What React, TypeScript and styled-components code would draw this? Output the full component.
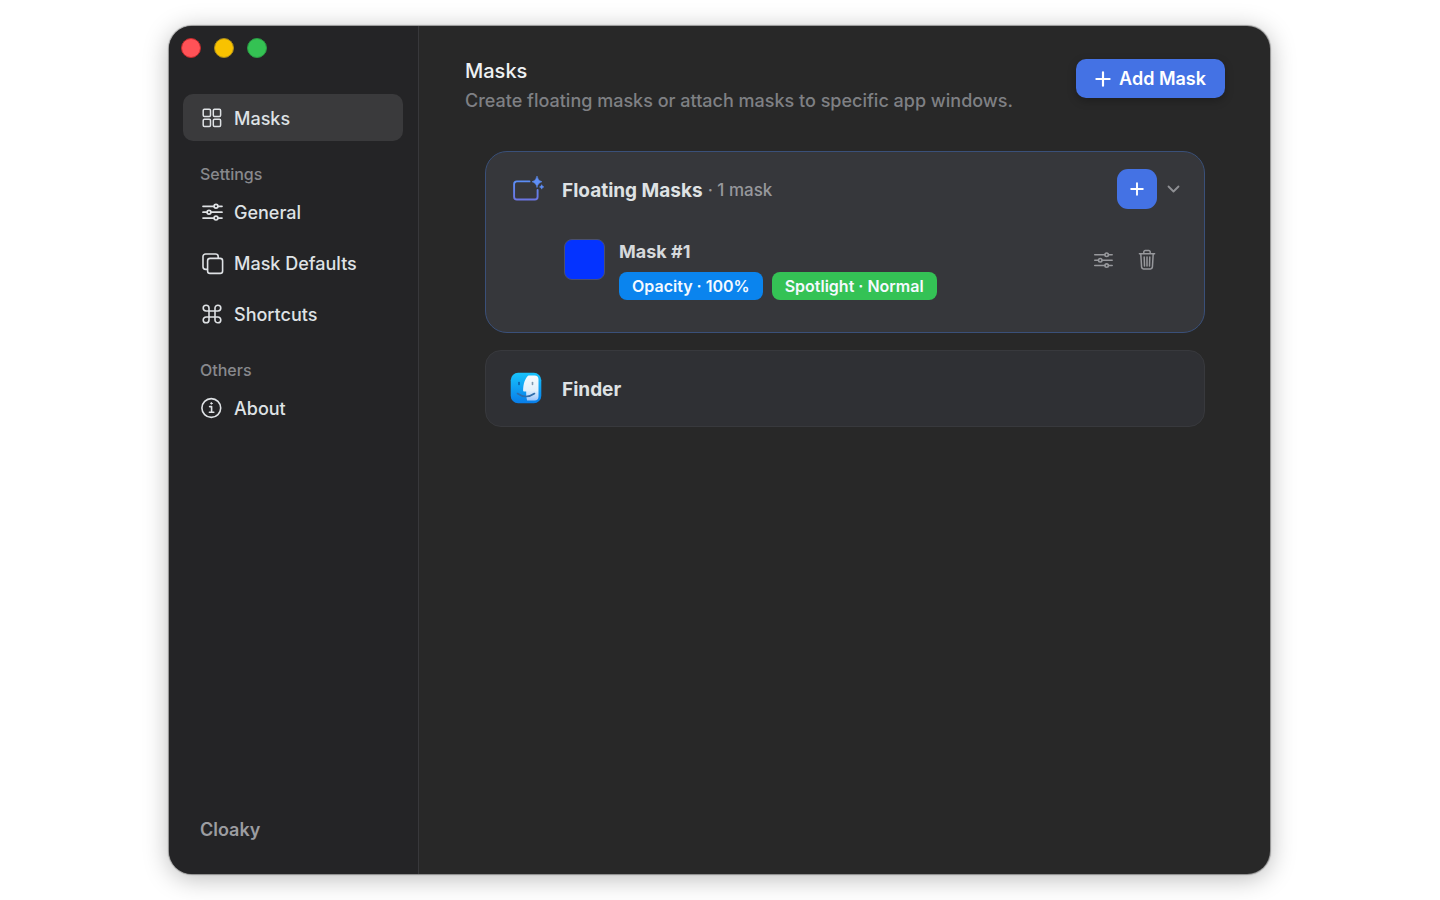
import React from "react";
import styled, { createGlobalStyle } from "styled-components";

const GlobalStyle = createGlobalStyle`
  * { box-sizing: border-box; }
  body {
    margin: 0;
    background: #ffffff;
    font-family: Inter, "Liberation Sans", sans-serif;
    -webkit-font-smoothing: antialiased;
  }
  h1, h2, h3, p, ul { margin: 0; padding: 0; }
  ul { list-style: none; }
  button { font-family: inherit; border: 0; padding: 0; background: none; cursor: pointer; }
`;

const Page = styled.div`
  display: flex;
  min-height: 100vh;
  padding: 26px 170px 26px 169px;
`;

const AppWindow = styled.div`
  display: flex;
  flex: 1;
  min-width: 0;
  overflow: hidden;
  border-radius: 23px;
  background: #282828;
  box-shadow: 0 0 1px 1px rgba(0, 0, 0, 0.35), 0 4px 26px rgba(0, 0, 0, 0.28);
`;

const Sidebar = styled.aside`
  display: flex;
  flex-direction: column;
  flex: none;
  width: 250px;
  padding: 12px 15px 32px 14px;
  background: #242426;
  border-right: 1px solid #38383b;
`;

const WindowControls = styled.div`
  display: flex;
  gap: 13px;
  height: 20px;
  margin: 0 0 36px -2px;
`;

const WindowControl = styled.button<{ $fill: string; $edge: string }>`
  width: 20px;
  height: 20px;
  border-radius: 50%;
  background: ${(p) => p.$fill};
  border: 1px solid ${(p) => p.$edge};
`;

const Nav = styled.nav`
  display: flex;
  flex-direction: column;
  flex: 1;
`;

const NavGroup = styled.ul`
  display: flex;
  flex-direction: column;
  gap: 4px;
`;

const NavHeading = styled.h3`
  padding: 22px 17px 3px;
  font-size: 16px;
  line-height: 22px;
  font-weight: 500;
  color: #88898d;
`;

const NavLink = styled.a<{ $active?: boolean }>`
  display: flex;
  align-items: center;
  gap: 10px;
  height: 47px;
  padding: 2px 17px 0;
  border-radius: 10px;
  background: ${(p) => (p.$active ? "#3a3a3c" : "transparent")};
  color: #dfe2e5;
  font-size: 18px;
  line-height: 24px;
  font-weight: 500;
  text-decoration: none;
  svg { flex: none; margin-bottom: 2px; }
`;

const Brand = styled.p`
  padding: 0 17px;
  font-size: 18px;
  line-height: 24px;
  font-weight: 600;
  color: #9c9da1;
`;

const Main = styled.main`
  flex: 1;
  min-width: 0;
  padding: 32px 45px 32px 46px;
`;

const Header = styled.header`
  display: flex;
  justify-content: space-between;
  align-items: flex-start;
  min-height: 93px;
`;

const Title = styled.h1`
  font-size: 20px;
  line-height: 26px;
  font-weight: 500;
  color: #eef1f3;
`;

const Subtitle = styled.p`
  margin-top: 5px;
  font-size: 18px;
  line-height: 24px;
  font-weight: 500;
  color: #7f8084;
`;

const AddButton = styled.button`
  display: flex;
  align-items: center;
  justify-content: center;
  gap: 8px;
  flex: none;
  height: 39px;
  margin-top: 1px;
  padding: 0 19px;
  border-radius: 10px;
  background: #4472e4;
  box-shadow: 0 3px 8px rgba(0, 0, 0, 0.25);
  color: #ffffff;
  font-size: 18px;
  line-height: 24px;
  font-weight: 600;
`;

const CardList = styled.div`
  display: flex;
  flex-direction: column;
  gap: 17px;
  padding: 0 20px;
`;

const Card = styled.section<{ $highlighted?: boolean }>`
  padding: ${(p) => (p.$highlighted ? "17px 24px 32px 24px" : "17px 24px 18px 24px")};
  border: 1px solid ${(p) => (p.$highlighted ? "#3a5079" : "#38393d")};
  border-radius: ${(p) => (p.$highlighted ? "22px" : "16px")};
  background: ${(p) => (p.$highlighted ? "#36373b" : "#2f3034")};
`;

const CardHeader = styled.div`
  display: flex;
  align-items: center;
  height: 40px;
`;

const CardIcon = styled.div`
  display: flex;
  flex: none;
  width: 52px;
`;

const CardTitle = styled.h2`
  padding-top: 3px;
  font-size: 19px;
  line-height: 26px;
  font-weight: 700;
  color: #dfe2e4;
`;

const Count = styled.span`
  margin-left: 5px;
  flex: 1;
  padding-top: 1px;
  font-size: 17px;
  line-height: 24px;
  font-weight: 500;
  color: #97989c;
`;

const SquareButton = styled.button`
  display: flex;
  align-items: center;
  justify-content: center;
  width: 40px;
  height: 40px;
  border-radius: 11px;
  background: #4472e4;
  color: #ffffff;
`;

const ChevronButton = styled.button`
  display: flex;
  margin-left: 10px;
  color: #8f9094;
`;

const MaskRow = styled.div`
  display: flex;
  align-items: flex-start;
  margin-top: 30px;
  padding-left: 54px;
`;

const Swatch = styled.div`
  flex: none;
  width: 41px;
  height: 41px;
  margin-right: 14px;
  border: 1px solid #4a5070;
  border-radius: 8px;
  background: #0433ff;
`;

const MaskInfo = styled.div`
  flex: 1;
  min-width: 0;
`;

const MaskName = styled.h3`
  font-size: 18px;
  line-height: 25px;
  font-weight: 700;
  color: #d6d9db;
`;

const Tags = styled.div`
  display: flex;
  gap: 9px;
  margin-top: 8px;
`;

const Tag = styled.span<{ $color: string }>`
  padding: 0 13px;
  border-radius: 8px;
  background: ${(p) => p.$color};
  color: #f4f9ff;
  font-size: 16px;
  line-height: 28px;
  font-weight: 600;
`;

const RowActions = styled.div`
  display: flex;
  align-items: center;
  gap: 23px;
  height: 41px;
  margin-right: 23px;
  color: #97989c;
  button { display: flex; color: inherit; }
`;

const stroke = {
  fill: "none",
  stroke: "currentColor",
  strokeWidth: 1.5,
  strokeLinecap: "round" as const,
  strokeLinejoin: "round" as const,
  "aria-hidden": true,
};

const GridIcon = () => (
  <svg width="24" height="24" viewBox="0 0 24 24" {...stroke}>
    <rect x="3.2" y="3.2" width="7.3" height="7.3" rx="1.2" />
    <rect x="13.3" y="3.2" width="7.3" height="7.3" rx="1.2" />
    <rect x="3.2" y="13.2" width="7.3" height="7.3" rx="1.2" />
    <rect x="13.3" y="13.2" width="7.3" height="7.3" rx="1.2" />
  </svg>
);

const SlidersIcon = ({ size = 24 }: { size?: number }) => (
  <svg width={size} height={size} viewBox="0 0 24 24" {...stroke} strokeWidth="1.7">
    <path d="M3 6.3h11M18 6.3h4M3 12.2h4M11 12.2h11M3 18.1h11M18 18.1h4" />
    <circle cx="16" cy="6.3" r="1.9" />
    <circle cx="9" cy="12.2" r="1.9" />
    <circle cx="16" cy="18.1" r="1.9" />
  </svg>
);

const CopyIcon = () => (
  <svg width="24" height="24" viewBox="0 0 24 24" {...stroke} strokeWidth="1.6">
    <rect x="7.6" y="7.4" width="15" height="15" rx="2.4" />
    <path d="M7.4 18.4H5.6A2.6 2.6 0 0 1 3 15.800V5.600a2.600 2.600 0 0 1 2.600-2.600h10a2.600 2.600 0 0 1 2.600 2.600v1.600" />
  </svg>
);

const CommandIcon = () => (
  <svg width="24" height="24" viewBox="0 0 24 24" {...stroke} strokeWidth="1.6">
    <path d="M9 9h6v6H9zM9 9H6.1A2.9 2.9 0 1 1 9 6.1zM15 9V6.1A2.9 2.9 0 1 1 17.9 9zM15 15h2.9a2.9 2.9 0 1 1-2.9 2.9zM9 15v2.9A2.9 2.9 0 1 1 6.1 15z" />
  </svg>
);

const InfoIcon = () => (
  <svg width="24" height="24" viewBox="0 0 24 24" {...stroke} strokeWidth="1.6">
    <circle cx="11.3" cy="12" r="9.4" />
    <path d="M9.6 10.6h2v5.6M9.4 16.2h4.4" />
    <circle cx="11.4" cy="7.4" r="0.8" fill="currentColor" strokeWidth="0.8" />
  </svg>
);

const PlusIcon = ({ size }: { size: number }) => (
  <svg width={size} height={size} viewBox="0 0 14 14" {...stroke} strokeWidth="1.9">
    <path d="M7 1.200v11.600M1.200 7h11.600" />
  </svg>
);

const ChevronIcon = () => (
  <svg width="13" height="14" viewBox="0 0 13 14" {...stroke} strokeWidth="1.8">
    <path d="M1.500 4.500l5 5 5-5" />
  </svg>
);

const TrashIcon = () => (
  <svg width="20" height="22" viewBox="0 0 20 22" {...stroke}>
    <path d="M2.400 4.800h15.200M6.800 4.600V3a1.400 1.400 0 0 1 1.400-1.400h3.600A1.400 1.400 0 0 1 13.200 3v1.600M3.800 5l.8 13.200a1.900 1.900 0 0 0 1.900 1.700h7a1.900 1.900 0 0 0 1.900-1.700L16.200 5M7.200 8l.3 9M10 8v9M12.800 8l-.3 9" />
  </svg>
);

const SparkleWindowIcon = () => (
  <svg width="34" height="28" viewBox="0 0 34 28" fill="none" aria-hidden="true">
    <defs>
      <linearGradient id="frame" x1="0" y1="0" x2="0" y2="1">
        <stop offset="0" stopColor="#5b8df5" />
        <stop offset="1" stopColor="#6b75e3" />
      </linearGradient>
    </defs>
    <path
      d="M19.500 6.400H6.900A2.800 2.800 0 0 0 4.100 9.200V21.700a2.800 2.800 0 0 0 2.800 2.800h17.900a2.800 2.800 0 0 0 2.800-2.800V15"
      stroke="url(#frame)"
      strokeWidth="1.9"
      strokeLinecap="round"
    />
    <path d="M27 1Q27.900 5.900 32 6.800Q27.900 7.700 27 12.600Q26.100 7.700 22 6.800Q26.100 5.900 27 1Z" fill="#5f8ff7" stroke="#5f8ff7" strokeWidth="0.500" />
    <path d="M31.700 9.600Q32.100 11.500 34 11.900Q32.100 12.300 31.700 14.200Q31.300 12.300 29.400 11.900Q31.300 11.500 31.700 9.600Z" fill="#5f8ff7" stroke="#5f8ff7" strokeWidth="0.400" />
  </svg>
);

const FinderIcon = () => (
  <svg width="32" height="32" viewBox="0 0 32 32" fill="none" aria-hidden="true">
    <defs>
      <linearGradient id="finderBlue" x1="0" y1="0" x2="0" y2="1">
        <stop offset="0" stopColor="#17c3fc" />
        <stop offset="1" stopColor="#087de9" />
      </linearGradient>
      <linearGradient id="finderFace" x1="0" y1="0" x2="0" y2="1">
        <stop offset="0" stopColor="#f7fbfd" />
        <stop offset="0.6" stopColor="#e2f0fb" />
        <stop offset="1" stopColor="#9cc5fb" />
      </linearGradient>
    </defs>
    <rect x="0.7" y="0.7" width="30.600" height="30.600" rx="7.500" fill="url(#finderBlue)" />
    <path
      d="M18.500 3.500h6a4 4 0 0 1 4 4v17a4 4 0 0 1-4 4h-7.400c-.8-3-1-6-.9-9h-2.300c-.5 0-.8-.4-.8-.9C13.200 12 15 6 18.500 3.500Z"
      fill="url(#finderFace)"
    />
    <path d="M9 10.500v2" stroke="#0c5ea8" strokeWidth="1.600" strokeLinecap="round" />
    <path d="M22.500 10.500v2" stroke="#7f9ab0" strokeWidth="1.600" strokeLinecap="round" />
    <path d="M7.500 21.500q8.500 6 17 0" stroke="#2f6dab" strokeWidth="1.600" strokeLinecap="round" />
  </svg>
);

export default function App() {
  return (
    <>
      <GlobalStyle />
      <Page>
        <AppWindow>
          <Sidebar>
            <WindowControls>
              <WindowControl aria-label="Close" $fill="#ff5257" $edge="#c22a2c" />
              <WindowControl aria-label="Minimize" $fill="#f8c200" $edge="#a98a1c" />
              <WindowControl aria-label="Zoom" $fill="#34c253" $edge="#2b9a44" />
            </WindowControls>
            <Nav>
              <NavGroup>
                <li><NavLink href="#masks" $active aria-current="page"><GridIcon />Masks</NavLink></li>
              </NavGroup>
              <NavHeading>Settings</NavHeading>
              <NavGroup>
                <li><NavLink href="#general"><SlidersIcon />General</NavLink></li>
                <li><NavLink href="#defaults"><CopyIcon />Mask Defaults</NavLink></li>
                <li><NavLink href="#shortcuts"><CommandIcon />Shortcuts</NavLink></li>
              </NavGroup>
              <NavHeading>Others</NavHeading>
              <NavGroup>
                <li><NavLink href="#about"><InfoIcon />About</NavLink></li>
              </NavGroup>
            </Nav>
            <Brand>Cloaky</Brand>
          </Sidebar>
          <Main>
            <Header>
              <div>
                <Title>Masks</Title>
                <Subtitle>Create floating masks or attach masks to specific app windows.</Subtitle>
              </div>
              <AddButton><PlusIcon size={16} />Add Mask</AddButton>
            </Header>
            <CardList>
              <Card $highlighted>
                <CardHeader>
                  <CardIcon><SparkleWindowIcon /></CardIcon>
                  <CardTitle>Floating Masks</CardTitle>
                  <Count>· 1 mask</Count>
                  <SquareButton aria-label="Add floating mask"><PlusIcon size={14} /></SquareButton>
                  <ChevronButton aria-label="Collapse"><ChevronIcon /></ChevronButton>
                </CardHeader>
                <MaskRow>
                  <Swatch />
                  <MaskInfo>
                    <MaskName>Mask #1</MaskName>
                    <Tags>
                      <Tag $color="#0a84ee">Opacity · 100%</Tag>
                      <Tag $color="#34c255">Spotlight · Normal</Tag>
                    </Tags>
                  </MaskInfo>
                  <RowActions>
                    <button aria-label="Edit mask"><SlidersIcon size={22} /></button>
                    <button aria-label="Delete mask"><TrashIcon /></button>
                  </RowActions>
                </MaskRow>
              </Card>
              <Card>
                <CardHeader>
                  <CardIcon><FinderIcon /></CardIcon>
                  <CardTitle>Finder</CardTitle>
                </CardHeader>
              </Card>
            </CardList>
          </Main>
        </AppWindow>
      </Page>
    </>
  );
}
